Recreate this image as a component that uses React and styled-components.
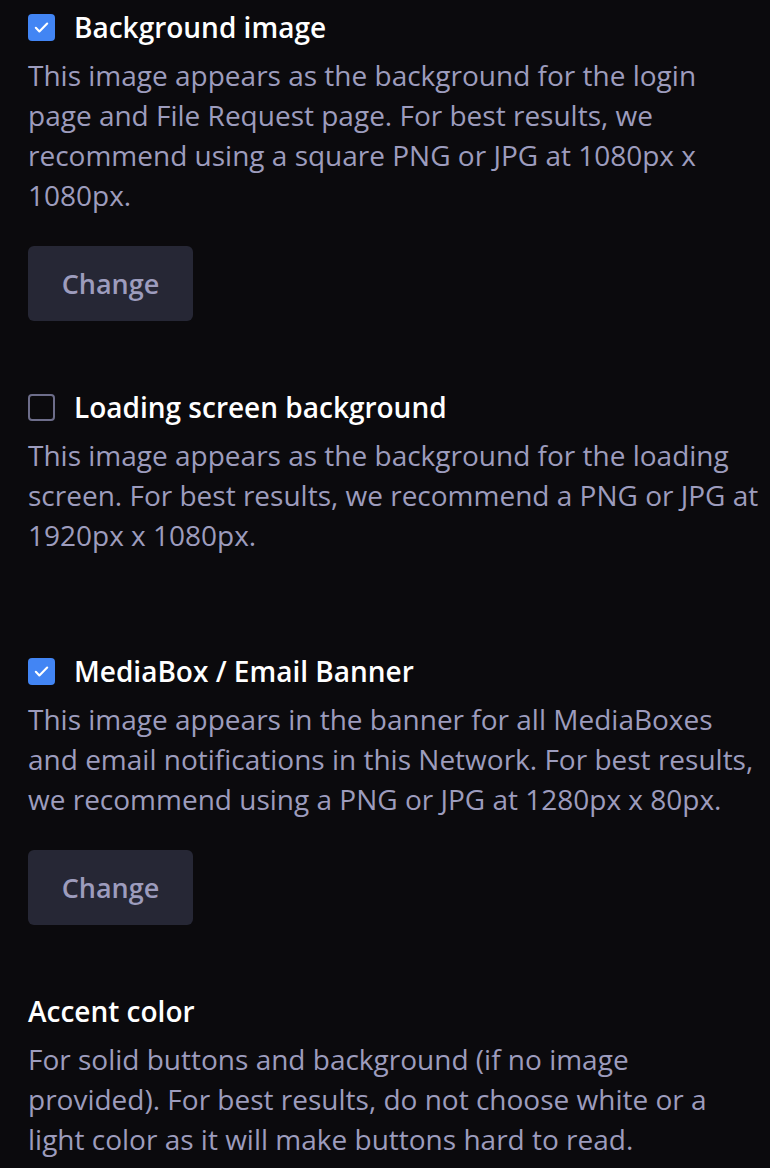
import React from 'react'
import styled, { createGlobalStyle } from 'styled-components'

const GlobalStyle = createGlobalStyle`
  html, body {
    margin: 0;
    padding: 0;
    background: #0b0a0d;
  }
  body {
    font-family: "Open Sans", "Noto Sans", sans-serif;
    -webkit-font-smoothing: antialiased;
  }
`

const Page = styled.div`
  padding: 7px 9px 0 28px;
  display: flex;
  flex-direction: column;
`

const Section = styled.section`
  display: flex;
  flex-direction: column;
  margin-bottom: ${p => (p.$hasButton ? 66 : 96)}px;
`

const Header = styled.label`
  display: flex;
  align-items: center;
  gap: 19px;
  height: 40px;
  cursor: pointer;
`

const Box = styled.span`
  box-sizing: border-box;
  width: 27px;
  height: 27px;
  border-radius: 4px;
  flex-shrink: 0;
  display: flex;
  align-items: center;
  justify-content: center;
  background: ${p => (p.$checked ? '#4285f4' : 'transparent')};
  border: ${p => (p.$checked ? 'none' : '2px solid #6d6d8a')};
`

const Title = styled.h3`
  margin: 0;
  font-size: 28px;
  font-weight: 600;
  line-height: 40px;
  color: #ffffff;
`

const Description = styled.p`
  margin: 8px 0 0;
  font-size: 28px;
  line-height: 40px;
  color: #9d9cbd;
`

const Button = styled.button`
  margin-top: 31px;
  align-self: flex-start;
  width: 165px;
  height: 75px;
  border: none;
  border-radius: 6px;
  background: #262735;
  color: #9d9cbd;
  font-family: inherit;
  font-size: 27px;
  font-weight: 600;
  cursor: pointer;
`

const Check = () => (
  <svg width="17" height="17" viewBox="0 0 24 24" fill="none" stroke="#fff" strokeWidth="3" strokeLinecap="round" strokeLinejoin="round">
    <path d="M4 12.5l5 5L20 6.5" />
  </svg>
)

const items = [
  {
    title: 'Background image',
    checked: true,
    text: 'This image appears as the background for the login page and File Request page. For best results, we recommend using a square PNG or JPG at 1080px x 1080px.',
    button: true,
  },
  {
    title: 'Loading screen background',
    checked: false,
    text: 'This image appears as the background for the loading screen. For best results, we recommend a PNG or JPG at 1920px x 1080px.',
    button: false,
  },
  {
    title: 'MediaBox / Email Banner',
    checked: true,
    text: 'This image appears in the banner for all MediaBoxes and email notifications in this Network. For best results, we recommend using a PNG or JPG at 1280px x 80px.',
    button: true,
  },
]

export default function App() {
  return (
    <>
      <GlobalStyle />
      <Page>
        {items.map(item => (
          <Section key={item.title} $hasButton={item.button}>
            <Header>
              <Box $checked={item.checked}>{item.checked && <Check />}</Box>
              <Title>{item.title}</Title>
            </Header>
            <Description>{item.text}</Description>
            {item.button && <Button>Change</Button>}
          </Section>
        ))}
        <Section $hasButton>
          <Header>
            <Title>Accent color</Title>
          </Header>
          <Description>
            For solid buttons and background (if no image provided). For best results, do not choose white or a light color as it will make buttons hard to read.
          </Description>
        </Section>
      </Page>
    </>
  )
}
